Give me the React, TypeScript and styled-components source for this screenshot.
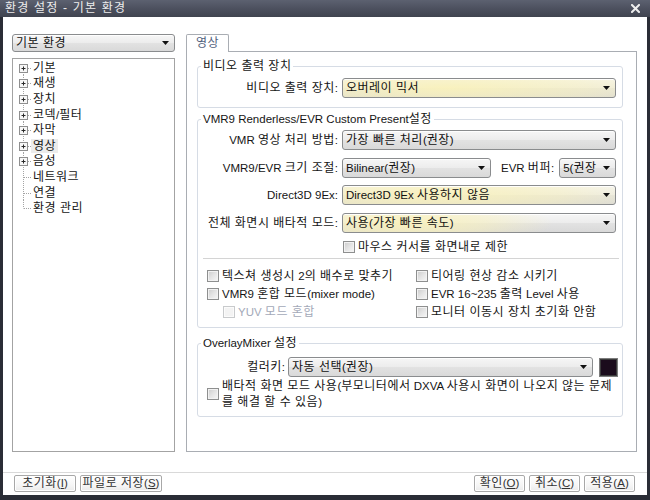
import React from "react";
import styled, { createGlobalStyle } from "styled-components";

const GlobalStyle = createGlobalStyle`
  html, body, #root { margin: 0; padding: 0; }
  body {
    background: #2a2d36;
    font-family: "Liberation Sans", "Noto Sans CJK KR", sans-serif;
    font-size: 11.5px;
    color: #151515;
  }
  *, *::before, *::after { box-sizing: border-box; }
`;

/* Hangul runs: slightly larger and spaced, to match the original Gulim widths */
const Ko = styled.span`
  font-size: 12px;
  letter-spacing: 0.5px;
`;

const HANGUL_RUN = /([\uAC00-\uD7A3\u3131-\u318E]+(?:\s+[\uAC00-\uD7A3\u3131-\u318E]+)*)/;

const k = (text: string) =>
  text.split(HANGUL_RUN).map((part, i) =>
    i % 2 === 1 ? <Ko key={i}>{part}</Ko> : <React.Fragment key={i}>{part}</React.Fragment>
  );

const Window = styled.div`
  width: 650px;
  height: 500px;
  display: flex;
  flex-direction: column;
  background: #2a2d36;
  overflow: hidden;
`;

const TitleBar = styled.div`
  height: 17px;
  flex: none;
  display: flex;
  align-items: center;
  justify-content: space-between;
  padding: 0 10px 0 5px;
  background: linear-gradient(#5c6170, #4b4f5d 55%, #40444f);
  color: #ededed;
  font-size: 12px;
  letter-spacing: 1.2px;
  line-height: 17px;
`;

const CloseIcon = styled.svg`
  flex: none;
`;

const Body = styled.div`
  flex: 1;
  margin: 0 3px 5px;
  background: #ffffff;
  display: flex;
  flex-direction: column;
  padding: 17px 0 3px;
`;

const Main = styled.div`
  height: 418px;
  flex: none;
  display: flex;
  gap: 11px;
  padding: 0 10px 0 9px;
`;

const LeftCol = styled.div`
  width: 163px;
  flex: none;
  display: flex;
  flex-direction: column;
  gap: 6px;
`;

const Combo = styled.div<{ $glow?: number; $w?: number; $h?: number; $stack?: boolean }>`
  height: ${(p) => p.$h ?? 20}px;
  display: flex;
  align-items: center;
  padding-left: 3px;
  ${(p) =>
    p.$stack
      ? "flex: none;"
      : p.$w
      ? `width: ${p.$w}px; flex: none;`
      : "flex: 1; min-width: 0;"}
  border: 1px solid #8a8c8e;
  border-radius: 3px;
  background: ${(p) =>
    p.$glow
      ? `radial-gradient(ellipse ${p.$glow}px 26px at ${Math.round(p.$glow * 0.4)}px 50%, rgba(250, 242, 185, 0.9), rgba(250, 242, 185, 0.5) 55%, rgba(250, 242, 185, 0) 100%), linear-gradient(#f6f6f6, #ececec 50%, #e2e2e2 52%, #d9d9d9)`
      : "linear-gradient(#f6f6f6, #ececec 50%, #e2e2e2 52%, #d9d9d9)"};
  box-shadow: inset 0 1px 0 rgba(255, 255, 255, 0.9);
  color: #111;
`;

const ComboText = styled.span`
  flex: 1;
  min-width: 0;
  overflow: hidden;
  white-space: nowrap;
  line-height: 14px;
`;

const ArrowSvg = styled.svg`
  flex: none;
  margin: 0 5px 0 2px;
`;

const Arrow = () => (
  <ArrowSvg width="7" height="4" viewBox="0 0 7 4">
    <path d="M0 0h7L3.5 4z" fill="#111" />
  </ArrowSvg>
);

const TreeBox = styled.div`
  flex: 1;
  border: 1px solid #a3a3a3;
  padding-top: 1px;
`;

const TreeRow = styled.div`
  height: 15.6px;
  display: flex;
  align-items: center;
`;

const Gutter = styled.svg`
  flex: none;
  overflow: visible;
`;

const TreeLabel = styled.span<{ $sel?: boolean }>`
  padding: 0 2px;
  line-height: 14px;
  background: ${(p) => (p.$sel ? "#ececec" : "transparent")};
  white-space: nowrap;
`;

const RightCol = styled.div`
  width: 451px;
  flex: none;
  display: flex;
  flex-direction: column;
`;

const TabStrip = styled.div`
  display: flex;
  height: 18px;
  flex: none;
`;

const Tab = styled.div`
  width: 43px;
  height: 18px;
  border: 1px solid #a9adb3;
  border-bottom: none;
  border-radius: 2px 2px 0 0;
  background: #fff;
  position: relative;
  z-index: 1;
  text-align: center;
  line-height: 16px;
  color: #52617d;
`;

const Panel = styled.div`
  flex: 1;
  margin-top: -1px;
  border: 1px solid #a9adb3;
  padding: 7px 13px 0 10px;
  display: flex;
  flex-direction: column;
`;

const Group = styled.fieldset<{ $mt: number; $pt: number; $pb: number }>`
  margin: ${(p) => p.$mt}px 0 0;
  padding: ${(p) => p.$pt}px 6px ${(p) => p.$pb}px;
  border: 1px solid #d6dce5;
  border-radius: 3px;
  min-width: 0;
`;

const Legend = styled.legend`
  padding: 0 2px;
  margin-left: -3px;
  line-height: 14px;
  height: 14px;
  white-space: nowrap;
`;

const FormGrid = styled.div`
  display: grid;
  grid-template-columns: 134px 1fr;
  column-gap: 4px;
  row-gap: 7.5px;
  align-items: center;
`;

const FieldLabel = styled.div`
  text-align: right;
  white-space: nowrap;
  line-height: 14px;
`;

const InlineRow = styled.div`
  display: flex;
  align-items: center;
  min-width: 0;
`;

const SubLabel = styled.span`
  margin: 0 5px 0 10px;
  white-space: nowrap;
  line-height: 14px;
`;

const Box = styled.span<{ $disabled?: boolean }>`
  width: 12px;
  height: 12px;
  flex: none;
  border: 1px solid ${(p) => (p.$disabled ? "#c8cacc" : "#8e8f8f")};
  background: ${(p) =>
    p.$disabled
      ? "#f3f3f3"
      : "linear-gradient(135deg, #cbcbcb 0%, #e4e4e4 50%, #f7f7f7 100%)"};
  box-shadow: inset 0 0 0 1px ${(p) => (p.$disabled ? "#fbfbfb" : "#f2f2f2")};
`;

const Check = styled.div<{ $disabled?: boolean; $indent?: number; $h?: number }>`
  display: flex;
  align-items: center;
  gap: 3px;
  height: ${(p) => p.$h ?? 18}px;
  padding-left: ${(p) => p.$indent ?? 0}px;
  white-space: nowrap;
  line-height: 14px;
  color: ${(p) => (p.$disabled ? "#a3a9b8" : "#151515")};
`;

const CheckText = styled.span`
  white-space: nowrap;
`;

const Divider = styled.div`
  height: 1px;
  background: #d4d4d4;
  margin: 4px -3px 0 -1px;
`;

const CheckGrid = styled.div`
  display: grid;
  grid-template-columns: 209px 1fr;
  padding-left: 3px;
  margin-top: 8px;
`;

const ColorRow = styled.div`
  display: flex;
  align-items: center;
  margin-right: -2px;
`;

const ColorLabel = styled.span`
  width: 81px;
  flex: none;
  text-align: right;
  margin-right: 3px;
  white-space: nowrap;
  line-height: 14px;
`;

const Swatch = styled.span`
  width: 19px;
  height: 19px;
  flex: none;
  margin-left: 6px;
  border: 1px solid #7c7c7c;
  background: #1b0c1c;
  box-shadow: inset 0 0 0 1px #3b3b3b;
`;

const MultiCheck = styled.div`
  display: flex;
  align-items: center;
  gap: 3px;
  margin-top: 1px;
  padding-left: 3px;
  line-height: 16px;
  white-space: nowrap;
`;

const Separator = styled.div`
  height: 1px;
  flex: none;
  background: #d9d9d9;
  margin-top: 20px;
`;

const ButtonBar = styled.div`
  display: flex;
  height: 17px;
  flex: none;
  margin-top: 2px;
  padding: 0 12px 0 11px;
  gap: 4px;
`;

const Spacer = styled.div`
  flex: 1;
`;

const Btn = styled.button<{ $w: number }>`
  width: ${(p) => p.$w}px;
  height: 17px;
  padding: 0;
  border: 1px solid #a8a8a8;
  border-radius: 2px;
  background: linear-gradient(#ffffff, #f6f6f6 60%, #ebebeb);
  box-shadow: inset 0 0 0 1px #ffffff;
  font: inherit;
  color: #333;
  line-height: 15px;
  white-space: nowrap;
`;

const Key = styled.span`
  text-decoration: underline;
`;

type TreeItem = { label: string; plus: boolean; sel?: boolean };

const treeItems: TreeItem[] = [
  { label: "기본", plus: true },
  { label: "재생", plus: true },
  { label: "장치", plus: true },
  { label: "코덱/필터", plus: true },
  { label: "자막", plus: true },
  { label: "영상", plus: true, sel: true },
  { label: "음성", plus: true },
  { label: "네트워크", plus: false },
  { label: "연결", plus: false },
  { label: "환경 관리", plus: false },
];

const TreeGutter = ({ plus, first, last }: { plus: boolean; first: boolean; last: boolean }) => (
  <Gutter width="18" height="16" viewBox="0 0 18 16">
    <g stroke="#a4a4a4" strokeWidth="1" strokeDasharray="1 1" fill="none">
      <line x1="10.5" y1={first ? 8 : 0} x2="10.5" y2={last ? 8.5 : 16} />
      <line x1="11" y1="8.5" x2="18" y2="8.5" />
    </g>
    {plus && (
      <g>
        <rect x="6.5" y="4.5" width="8" height="8" fill="#f7f7f7" stroke="#8f8f8f" />
        <line x1="8.5" y1="8.5" x2="12.5" y2="8.5" stroke="#2a2a2a" />
        <line x1="10.5" y1="6.5" x2="10.5" y2="10.5" stroke="#2a2a2a" />
      </g>
    )}
  </Gutter>
);

type CheckItem = { label: string; disabled?: boolean; indent?: number };

const checkItems: CheckItem[] = [
  { label: "텍스쳐 생성시 2의 배수로 맞추기" },
  { label: "티어링 현상 감소 시키기" },
  { label: "VMR9 혼합 모드(mixer mode)" },
  { label: "EVR 16~235 출력 Level 사용" },
  { label: "YUV 모드 혼합", disabled: true, indent: 16 },
  { label: "모니터 이동시 장치 초기화 안함" },
];

export default function App() {
  return (
    <>
      <GlobalStyle />
      <Window>
        <TitleBar>
          <span>환경 설정 - 기본 환경</span>
          <CloseIcon width="9" height="9" viewBox="0 0 9 9">
            <path d="M1 1L8 8M8 1L1 8" stroke="#eeeeee" strokeWidth="2" strokeLinecap="square" />
          </CloseIcon>
        </TitleBar>
        <Body>
          <Main>
            <LeftCol>
              <Combo $h={18} $stack>
                <ComboText>{k("기본 환경")}</ComboText>
                <Arrow />
              </Combo>
              <TreeBox>
                {treeItems.map((it, i) => (
                  <TreeRow key={it.label}>
                    <TreeGutter plus={it.plus} first={i === 0} last={i === treeItems.length - 1} />
                    <TreeLabel $sel={it.sel}>{k(it.label)}</TreeLabel>
                  </TreeRow>
                ))}
              </TreeBox>
            </LeftCol>
            <RightCol>
              <TabStrip>
                <Tab>{k("영상")}</Tab>
              </TabStrip>
              <Panel>
                <Group $mt={0} $pt={5} $pb={9}>
                  <Legend>{k("비디오 출력 장치")}</Legend>
                  <FormGrid>
                    <FieldLabel>{k("비디오 출력 장치:")}</FieldLabel>
                    <Combo $glow={260}>
                      <ComboText>{k("오버레이 믹서")}</ComboText>
                      <Arrow />
                    </Combo>
                  </FormGrid>
                </Group>

                <Group $mt={4} $pt={4} $pb={6}>
                  <Legend>{k("VMR9 Renderless/EVR Custom Present설정")}</Legend>
                  <FormGrid>
                    <FieldLabel>{k("VMR 영상 처리 방법:")}</FieldLabel>
                    <Combo>
                      <ComboText>{k("가장 빠른 처리(권장)")}</ComboText>
                      <Arrow />
                    </Combo>
                    <FieldLabel>{k("VMR9/EVR 크기 조절:")}</FieldLabel>
                    <InlineRow>
                      <Combo $w={149}>
                        <ComboText>{k("Bilinear(권장)")}</ComboText>
                        <Arrow />
                      </Combo>
                      <SubLabel>{k("EVR 버퍼:")}</SubLabel>
                      <Combo>
                        <ComboText>{k("5(권장")}</ComboText>
                        <Arrow />
                      </Combo>
                    </InlineRow>
                    <FieldLabel>{k("Direct3D 9Ex:")}</FieldLabel>
                    <Combo $glow={230}>
                      <ComboText>{k("Direct3D 9Ex 사용하지 않음")}</ComboText>
                      <Arrow />
                    </Combo>
                    <FieldLabel>{k("전체 화면시 배타적 모드:")}</FieldLabel>
                    <Combo $glow={150}>
                      <ComboText>{k("사용(가장 빠른 속도)")}</ComboText>
                      <Arrow />
                    </Combo>
                    <div />
                    <Check $h={14} $indent={1}>
                      <Box />
                      <CheckText>{k("마우스 커서를 화면내로 제한")}</CheckText>
                    </Check>
                  </FormGrid>
                  <Divider />
                  <CheckGrid>
                    {checkItems.map((c) => (
                      <Check key={c.label} $disabled={c.disabled} $indent={c.indent}>
                        <Box $disabled={c.disabled} />
                        <CheckText>{k(c.label)}</CheckText>
                      </Check>
                    ))}
                  </CheckGrid>
                </Group>

                <Group $mt={8} $pt={7} $pb={6}>
                  <Legend>{k("OverlayMixer 설정")}</Legend>
                  <ColorRow>
                    <ColorLabel>{k("컬러키:")}</ColorLabel>
                    <Combo>
                      <ComboText>{k("자동 선택(권장)")}</ComboText>
                      <Arrow />
                    </Combo>
                    <Swatch />
                  </ColorRow>
                  <MultiCheck>
                    <Box />
                    <CheckText>
                      {k("배타적 화면 모드 사용(부모니터에서 DXVA 사용시 화면이 나오지 않는 문제")}
                      <br />
                      {k("를 해결 할 수 있음)")}
                    </CheckText>
                  </MultiCheck>
                </Group>
              </Panel>
            </RightCol>
          </Main>
          <Separator />
          <ButtonBar>
            <Btn $w={62}>
              {k("초기화")}(<Key>I</Key>)
            </Btn>
            <Btn $w={82}>
              {k("파일로 저장")}(<Key>S</Key>)
            </Btn>
            <Spacer />
            <Btn $w={51}>
              {k("확인")}(<Key>O</Key>)
            </Btn>
            <Btn $w={51}>
              {k("취소")}(<Key>C</Key>)
            </Btn>
            <Btn $w={51}>
              {k("적용")}(<Key>A</Key>)
            </Btn>
          </ButtonBar>
        </Body>
      </Window>
    </>
  );
}
